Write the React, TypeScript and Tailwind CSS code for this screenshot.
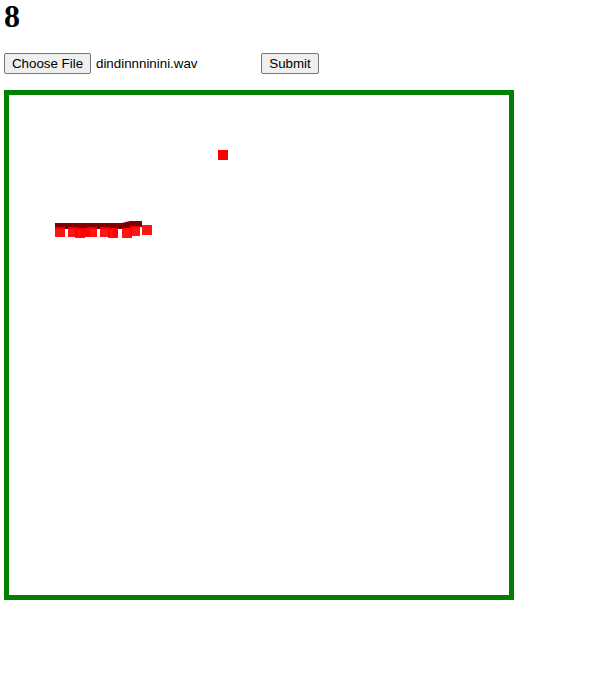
import React from "react";

const reds: [number, number][] = [
  [55, 227], [68, 227], [75, 228], [87, 227], [100, 227], [108, 228], [122, 228], [130, 226], [142, 225],
];

export default function App() {
  const ox = 9;
  const oy = 95;
  return (
    <div className="pl-[4px] bg-white min-h-[699px] font-['Liberation_Sans',Arial,sans-serif] text-black">
      <h1 className="text-[32px] leading-[38px] -mt-[3px] font-bold font-['Liberation_Serif','Times_New_Roman',serif] pl-[0px]">8</h1>
      <div className="flex items-center mt-[18px] h-[21px]">
        <button className="h-[21px] w-[87px] border border-[#767676] bg-[#efefef] rounded-[2px] text-[13.33px] leading-none text-black">
          Choose File
        </button>
        <span className="ml-[5px] w-[165px] text-[13.33px]">dindinnninini.wav</span>
        <button className="h-[21px] w-[58px] border border-[#767676] bg-[#efefef] rounded-[2px] text-[13.33px] leading-none text-black">
          Submit
        </button>
      </div>
      <div className="mt-[16px] w-[510px] h-[510px] border-[5px] border-[#008000]">
        <svg width="500" height="500" viewBox="0 0 500 500" className="block">
          <rect x={218 - ox} y={150 - oy} width="10" height="10" fill="#ff0000" />
          <polygon
            points={`${55 - ox},${223 - oy} ${122 - ox},${223 - oy} ${130 - ox},${221 - oy} ${142 - ox},${221 - oy} ${142 - ox},${227 - oy} ${130 - ox},${228 - oy} ${122 - ox},${229 - oy} ${55 - ox},${229 - oy}`}
            fill="#800000"
          />
          {reds.map(([x, y], i) => (
            <rect key={i} x={x - ox} y={y - oy} width="10" height="10" fill="#ff0000" fillOpacity={0.92} />
          ))}
          <rect x={80 - ox} y={228 - oy} width="10" height="9" fill="#ff0000" />
          <rect x={112 - ox} y={228 - oy} width="6" height="9" fill="#ff0000" fillOpacity={0.8} />
        </svg>
      </div>
    </div>
  );
}
